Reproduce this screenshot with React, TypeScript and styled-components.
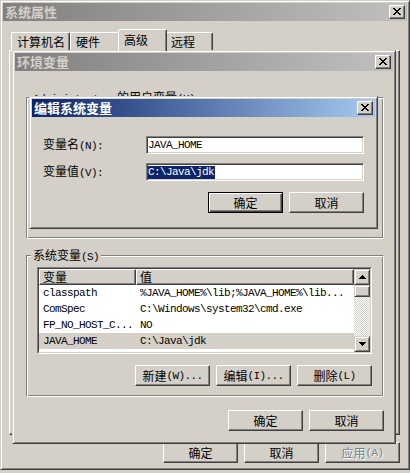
import React from "react";
import styled, { createGlobalStyle, css } from "styled-components";

const FACE = "#d4d0c8";
const SHADOW = "#808080";
const DARK = "#404040";
const CJK = `"Noto Sans CJK SC", "Noto Sans", sans-serif`;
const MONO = `"Liberation Mono", "Noto Sans CJK SC", monospace`;

const Global = createGlobalStyle`
  html, body { margin: 0; padding: 0; background: ${FACE}; }
  body { font-family: ${CJK}; font-size: 12px; color: #000; }
  * { box-sizing: border-box; }
`;

const Desktop = styled.div`
  position: relative;
  width: 410px;
  height: 473px;
  overflow: hidden;
  background: ${FACE};
  line-height: 14px;
`;

const Window = styled.div<{ $x: number; $y: number; $w: number; $h: number }>`
  position: absolute;
  left: ${(p) => p.$x}px;
  top: ${(p) => p.$y}px;
  width: ${(p) => p.$w}px;
  height: ${(p) => p.$h}px;
  background: ${FACE};
  border: 1px solid;
  border-color: ${FACE} ${DARK} ${DARK} ${FACE};
  box-shadow: inset 1px 1px #fff, inset -1px -1px ${SHADOW};
  padding: 2px;
  display: flex;
  flex-direction: column;
`;

const TitleBar = styled.div<{ $active?: boolean }>`
  height: 18px;
  flex: none;
  display: flex;
  align-items: center;
  justify-content: space-between;
  padding: 0 2px 0 2px;
  background: ${(p) =>
    p.$active
      ? "linear-gradient(to right, #0a246a, #a6caf0)"
      : "linear-gradient(to right, #808080, #c0c0c0)"};
  color: ${(p) => (p.$active ? "#fff" : FACE)};
  font-weight: bold;
  font-size: 13px;
`;

const CloseBtn = styled.div`
  width: 16px;
  height: 14px;
  flex: none;
  background: ${FACE};
  border: 1px solid;
  border-color: #fff ${DARK} ${DARK} #fff;
  box-shadow: inset -1px -1px ${SHADOW};
  display: flex;
  align-items: center;
  justify-content: center;
  padding: 0 1px 1px 0;
`;

const Button = styled.div<{ $default?: boolean; $disabled?: boolean }>`
  width: 75px;
  height: 21px;
  flex: none;
  display: flex;
  align-items: center;
  justify-content: center;
  background: ${FACE};
  border: 1px solid;
  border-color: #fff ${DARK} ${DARK} #fff;
  box-shadow: inset -1px -1px ${SHADOW};
  color: ${(p) => (p.$disabled ? SHADOW : "#000")};
  text-shadow: ${(p) => (p.$disabled ? "1px 1px #fff" : "none")};
  ${(p) =>
    p.$default &&
    css`
      border-color: #000;
      box-shadow: inset 1px 1px #fff, inset -1px -1px ${DARK}, inset -2px -2px ${SHADOW};
    `}
`;

const ButtonRow = styled.div<{ $top: number }>`
  display: flex;
  justify-content: flex-end;
  gap: 6px;
  margin-top: ${(p) => p.$top}px;
  flex: none;
`;

const Half = styled.span`
  font-family: ${MONO};
  font-size: 11px;
  letter-spacing: -0.6px;
`;

function T({ children }: { children: string }) {
  const parts = children.split(/([\x20-\x7e]+)/).filter(Boolean);
  return (
    <>
      {parts.map((s, i) =>
        /^[\x20-\x7e]+$/.test(s) ? <Half key={i}>{s}</Half> : <React.Fragment key={i}>{s}</React.Fragment>
      )}
    </>
  );
}

const XGlyph = () => (
  <svg width="8" height="7" viewBox="0 0 8 7" shapeRendering="crispEdges">
    <path
      fill="#000"
      d="M0 0h2v1h-2z M6 0h2v1h-2z M1 1h2v1h-2z M5 1h2v1h-2z M2 2h4v1h-4z M3 3h2v1h-2z M2 4h4v1h-4z M1 5h2v1h-2z M5 5h2v1h-2z M0 6h2v1h-2z M6 6h2v1h-2z"
    />
  </svg>
);

const Arrow = ({ down }: { down?: boolean }) => (
  <svg width="7" height="4" viewBox="0 0 7 4" shapeRendering="crispEdges" style={down ? { transform: "scaleY(-1)" } : undefined}>
    <path fill="#000" d="M3 0h1v1h-1z M2 1h3v1h-3z M1 2h5v1h-5z M0 3h7v1h-7z" />
  </svg>
);

/* ---------- outer window parts ---------- */
const OuterBody = styled.div`
  flex: 1;
  display: flex;
  flex-direction: column;
  padding: 8px 7px 4px 6px;
`;

const TabRow = styled.div`
  display: flex;
  align-items: flex-end;
  height: 21px;
  padding-left: 2px;
  position: relative;
  z-index: 1;
  flex: none;
`;

const Tab = styled.div<{ $w: number; $active?: boolean }>`
  width: ${(p) => p.$w}px;
  height: 18px;
  flex: none;
  background: ${FACE};
  border-top: 1px solid #fff;
  border-left: 1px solid #fff;
  border-right: 1px solid ${DARK};
  box-shadow: inset -1px 0 ${SHADOW};
  border-radius: 2px 2px 0 0;
  padding-left: 5px;
  display: flex;
  align-items: center;
  ${(p) =>
    p.$active &&
    css`
      width: ${p.$w + 4}px;
      height: 22px;
      margin: 0 -2px -1px;
      position: relative;
      z-index: 2;
      padding-bottom: 2px;
    `}
`;

const TabPanel = styled.div`
  height: 385px;
  flex: none;
  border: 1px solid;
  border-color: #fff ${DARK} ${DARK} #fff;
  box-shadow: inset -1px -1px ${SHADOW};
`;

/* ---------- env dialog parts ---------- */
const EnvBody = styled.div`
  flex: 1;
  display: flex;
  flex-direction: column;
  padding: 26px 9px 0 11px;
`;

const Group = styled.div<{ $h: number; $top?: number }>`
  position: relative;
  height: ${(p) => p.$h}px;
  margin-top: ${(p) => p.$top ?? 0}px;
  flex: none;
  border: 1px solid;
  border-color: ${SHADOW} #fff #fff ${SHADOW};
  box-shadow: inset 1px 1px #fff, inset -1px -1px ${SHADOW};
  padding: 11px 11px 10px 10px;
  display: flex;
  flex-direction: column;
`;

const Legend = styled.div`
  position: absolute;
  top: -8px;
  left: 4px;
  padding: 0 2px;
  background: ${FACE};
  line-height: 14px;
  white-space: nowrap;
`;

const ListView = styled.div`
  width: 335px;
  height: 87px;
  flex: none;
  border: 1px solid;
  border-color: ${SHADOW} #fff #fff ${SHADOW};
`;

const ListInner = styled.div`
  height: 100%;
  border: 1px solid;
  border-color: ${DARK} ${FACE} ${FACE} ${DARK};
  background: #fff;
  display: flex;
`;

const ListMain = styled.div`
  flex: 1;
  display: flex;
  flex-direction: column;
  overflow: hidden;
`;

const Header = styled.div`
  height: 16px;
  display: flex;
  flex: none;
`;

const HeaderCell = styled.div<{ $w?: number }>`
  ${(p) => (p.$w ? `width: ${p.$w}px; flex: none;` : "flex: 1;")}
  height: 16px;
  background: ${FACE};
  border: 1px solid;
  border-color: #fff ${DARK} ${DARK} #fff;
  box-shadow: inset -1px -1px ${SHADOW};
  padding-left: 3px;
  display: flex;
  align-items: center;
`;

const Row = styled.div<{ $selected?: boolean }>`
  height: 16px;
  display: flex;
  align-items: center;
  flex: none;
  background: ${(p) => (p.$selected ? FACE : "transparent")};
  font-family: ${MONO};
  font-size: 11px;
  letter-spacing: -0.6px;
  white-space: nowrap;
`;

const Cell = styled.div<{ $w?: number }>`
  ${(p) => (p.$w ? `width: ${p.$w}px; flex: none;` : "flex: 1;")}
  padding-left: 4px;
  overflow: hidden;
`;

const ScrollBar = styled.div`
  width: 16px;
  flex: none;
  display: flex;
  flex-direction: column;
`;

const ScrollBtn = styled.div<{ $h: number }>`
  width: 16px;
  height: ${(p) => p.$h}px;
  flex: none;
  background: ${FACE};
  border: 1px solid;
  border-color: ${FACE} ${DARK} ${DARK} ${FACE};
  box-shadow: inset 1px 1px #fff, inset -1px -1px ${SHADOW};
  display: flex;
  align-items: center;
  justify-content: center;
`;

const Track = styled.div`
  flex: 1;
  background-image: conic-gradient(${FACE} 25%, #fff 0 50%, ${FACE} 0 75%, #fff 0);
  background-size: 2px 2px;
`;

/* ---------- edit dialog parts ---------- */
const EditBody = styled.div`
  flex: 1;
  display: flex;
  flex-direction: column;
  padding: 19px 11px 0 11px;
`;

const FieldRow = styled.div<{ $top?: number }>`
  display: flex;
  align-items: center;
  height: 18px;
  margin-top: ${(p) => p.$top ?? 0}px;
  flex: none;
`;

const FieldLabel = styled.div`
  width: 103px;
  flex: none;
`;

const Field = styled.div`
  width: 218px;
  height: 18px;
  flex: none;
  background: #fff;
  border: 1px solid;
  border-color: ${SHADOW} #fff #fff ${SHADOW};
  box-shadow: inset 1px 1px ${DARK}, inset -1px -1px ${FACE};
  padding-left: 1px;
  display: flex;
  align-items: center;
  font-family: ${MONO};
  font-size: 11px;
  letter-spacing: -0.6px;
  white-space: nowrap;
`;

const SelText = styled.span`
  background: #0a246a;
  color: #fff;
  line-height: 13px;
  padding-right: 1px;
`;

const rows = [
  ["classpath", "%JAVA_HOME%\\lib;%JAVA_HOME%\\lib..."],
  ["ComSpec", "C:\\Windows\\system32\\cmd.exe"],
  ["FP_NO_HOST_C...", "NO"],
  ["JAVA_HOME", "C:\\Java\\jdk"],
];

export default function App() {
  return (
    <Desktop>
      <Global />
      {/* 系统属性 */}
      <Window $x={0} $y={0} $w={410} $h={470}>
        <TitleBar>
          <span>系统属性</span>
          <CloseBtn>
            <XGlyph />
          </CloseBtn>
        </TitleBar>
        <OuterBody>
          <TabRow>
            <Tab $w={59}>计算机名</Tab>
            <Tab $w={50}>硬件</Tab>
            <Tab $w={45} $active>
              高级
            </Tab>
            <Tab $w={48}>远程</Tab>
          </TabRow>
          <TabPanel />
          <ButtonRow $top={7}>
            <Button>确定</Button>
            <Button>取消</Button>
            <Button $disabled>
              <T>应用(A)</T>
            </Button>
          </ButtonRow>
        </OuterBody>
      </Window>

      {/* 环境变量 */}
      <Window $x={12} $y={50} $w={384} $h={394}>
        <TitleBar>
          <span>环境变量</span>
          <CloseBtn>
            <XGlyph />
          </CloseBtn>
        </TitleBar>
        <EnvBody>
          <Group $h={142}>
            <Legend>
              <T>Administrator 的用户变量(U)</T>
            </Legend>
          </Group>
          <Group $h={142} $top={16}>
            <Legend>
              <T>系统变量(S)</T>
            </Legend>
            <ListView>
              <ListInner>
                <ListMain>
                  <Header>
                    <HeaderCell $w={97}>变量</HeaderCell>
                    <HeaderCell>值</HeaderCell>
                  </Header>
                  {rows.map(([k, v], i) => (
                    <Row key={k} $selected={i === 3}>
                      <Cell $w={97}>{k}</Cell>
                      <Cell>{v}</Cell>
                    </Row>
                  ))}
                </ListMain>
                <ScrollBar>
                  <ScrollBtn $h={16}>
                    <Arrow />
                  </ScrollBtn>
                  <ScrollBtn $h={12} />
                  <Track />
                  <ScrollBtn $h={16}>
                    <Arrow down />
                  </ScrollBtn>
                </ScrollBar>
              </ListInner>
            </ListView>
            <ButtonRow $top={11}>
              <Button>
                <T>新建(W)...</T>
              </Button>
              <Button>
                <T>编辑(I)...</T>
              </Button>
              <Button>
                <T>删除(L)</T>
              </Button>
            </ButtonRow>
          </Group>
          <ButtonRow $top={13}>
            <Button>确定</Button>
            <Button>取消</Button>
          </ButtonRow>
        </EnvBody>
      </Window>

      {/* 编辑系统变量 */}
      <Window $x={29} $y={96} $w={349} $h={133}>
        <TitleBar $active>
          <span>编辑系统变量</span>
          <CloseBtn>
            <XGlyph />
          </CloseBtn>
        </TitleBar>
        <EditBody>
          <FieldRow>
            <FieldLabel>
              <T>变量名(N):</T>
            </FieldLabel>
            <Field>JAVA_HOME</Field>
          </FieldRow>
          <FieldRow $top={9}>
            <FieldLabel>
              <T>变量值(V):</T>
            </FieldLabel>
            <Field>
              <SelText>C:\Java\jdk</SelText>
            </Field>
          </FieldRow>
          <ButtonRow $top={11}>
            <Button $default>确定</Button>
            <Button>取消</Button>
          </ButtonRow>
        </EditBody>
      </Window>
    </Desktop>
  );
}
